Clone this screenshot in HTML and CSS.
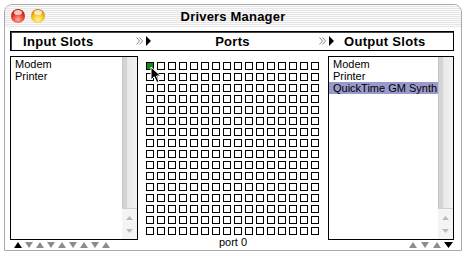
FILE: index.html
```html
<!DOCTYPE html>
<html>
<head>
<meta charset="utf-8">
<link rel="stylesheet" href="styles.css">
</head>
<body>
<div class="window">
  <div class="titlebar">
    <div class="lights"><span class="light red"></span><span class="light yellow"></span></div>
    <div class="title">Drivers Manager</div>
    <div></div>
  </div>
  <div class="content">
    <div class="header">
      <div class="hcol hleft">
        <span>Input Slots</span>
        <svg class="harrow" width="16" height="10" viewBox="0 0 16 10"><polyline points="0.5,1.5 3.5,5 0.5,8.5" fill="none" stroke="#888"/><polyline points="3.5,1.5 6.5,5 3.5,8.5" fill="none" stroke="#888"/><polygon points="10,0 15,5 10,10" fill="#000"/></svg>
      </div>
      <div class="hcol hmid">Ports</div>
      <div class="hcol hright">
        <svg class="harrow" width="16" height="10" viewBox="0 0 16 10"><polyline points="0.5,1.5 3.5,5 0.5,8.5" fill="none" stroke="#888"/><polyline points="3.5,1.5 6.5,5 3.5,8.5" fill="none" stroke="#888"/><polygon points="10,0 15,5 10,10" fill="#000"/></svg>
        <span>Output Slots</span>
      </div>
    </div>
    <div class="panes">
      <div class="list">
        <div class="items">
          <div class="item">Modem</div>
          <div class="item">Printer</div>
        </div>
        <div class="scrollbar">
          <div class="track"></div>
          <div class="sarrows">
            <svg width="7" height="4" viewBox="0 0 7 4"><polygon points="0,4 3.5,0 7,4" fill="#bcbcbc"/></svg>
            <svg width="7" height="4" viewBox="0 0 7 4"><polygon points="0,0 7,0 3.5,4" fill="#bcbcbc"/></svg>
          </div>
        </div>
      </div>
      <div class="matrix">
        <div class="grid">
          <i class="on"></i><i></i><i></i><i></i><i></i><i></i><i></i><i></i><i></i><i></i><i></i><i></i><i></i><i></i><i></i><i></i>
          <i></i><i></i><i></i><i></i><i></i><i></i><i></i><i></i><i></i><i></i><i></i><i></i><i></i><i></i><i></i><i></i>
          <i></i><i></i><i></i><i></i><i></i><i></i><i></i><i></i><i></i><i></i><i></i><i></i><i></i><i></i><i></i><i></i>
          <i></i><i></i><i></i><i></i><i></i><i></i><i></i><i></i><i></i><i></i><i></i><i></i><i></i><i></i><i></i><i></i>
          <i></i><i></i><i></i><i></i><i></i><i></i><i></i><i></i><i></i><i></i><i></i><i></i><i></i><i></i><i></i><i></i>
          <i></i><i></i><i></i><i></i><i></i><i></i><i></i><i></i><i></i><i></i><i></i><i></i><i></i><i></i><i></i><i></i>
          <i></i><i></i><i></i><i></i><i></i><i></i><i></i><i></i><i></i><i></i><i></i><i></i><i></i><i></i><i></i><i></i>
          <i></i><i></i><i></i><i></i><i></i><i></i><i></i><i></i><i></i><i></i><i></i><i></i><i></i><i></i><i></i><i></i>
          <i></i><i></i><i></i><i></i><i></i><i></i><i></i><i></i><i></i><i></i><i></i><i></i><i></i><i></i><i></i><i></i>
          <i></i><i></i><i></i><i></i><i></i><i></i><i></i><i></i><i></i><i></i><i></i><i></i><i></i><i></i><i></i><i></i>
          <i></i><i></i><i></i><i></i><i></i><i></i><i></i><i></i><i></i><i></i><i></i><i></i><i></i><i></i><i></i><i></i>
          <i></i><i></i><i></i><i></i><i></i><i></i><i></i><i></i><i></i><i></i><i></i><i></i><i></i><i></i><i></i><i></i>
          <i></i><i></i><i></i><i></i><i></i><i></i><i></i><i></i><i></i><i></i><i></i><i></i><i></i><i></i><i></i><i></i>
          <i></i><i></i><i></i><i></i><i></i><i></i><i></i><i></i><i></i><i></i><i></i><i></i><i></i><i></i><i></i><i></i>
          <i></i><i></i><i></i><i></i><i></i><i></i><i></i><i></i><i></i><i></i><i></i><i></i><i></i><i></i><i></i><i></i>
          <i></i><i></i><i></i><i></i><i></i><i></i><i></i><i></i><i></i><i></i><i></i><i></i><i></i><i></i><i></i><i></i>
        </div>
        <svg class="cursor" width="12" height="18" viewBox="0 0 12 18"><path d="M1 1 V14 L4.2 10.8 L6.8 16.6 L9 15.6 L6.5 10 H10.8 Z" fill="#000" stroke="#fff" stroke-width="1" stroke-linejoin="miter"/></svg>
      </div>
      <div class="list">
        <div class="items">
          <div class="item">Modem</div>
          <div class="item">Printer</div>
          <div class="item selected">QuickTime GM Synth</div>
        </div>
        <div class="scrollbar">
          <div class="track"></div>
          <div class="sarrows">
            <svg width="7" height="4" viewBox="0 0 7 4"><polygon points="0,4 3.5,0 7,4" fill="#bcbcbc"/></svg>
            <svg width="7" height="4" viewBox="0 0 7 4"><polygon points="0,0 7,0 3.5,4" fill="#bcbcbc"/></svg>
          </div>
        </div>
      </div>
    </div>
    <div class="footer">
      <svg class="tris-left" width="97" height="6" viewBox="0 0 97 6">
        <polygon points="0,6 4,0 8,6" fill="#000"/>
        <polygon points="11,0 19,0 15,6" fill="#8c8c8c"/>
        <polygon points="22,6 26,0 30,6" fill="#8c8c8c"/>
        <polygon points="33,0 41,0 37,6" fill="#8c8c8c"/>
        <polygon points="44,6 48,0 52,6" fill="#8c8c8c"/>
        <polygon points="55,0 63,0 59,6" fill="#8c8c8c"/>
        <polygon points="66,6 70,0 74,6" fill="#8c8c8c"/>
        <polygon points="77,0 85,0 81,6" fill="#8c8c8c"/>
        <polygon points="88,6 92,0 96,6" fill="#8c8c8c"/>
      </svg>
      <div class="port-label">port 0</div>
      <svg class="tris-right" width="44" height="6" viewBox="0 0 44 6">
        <polygon points="0,6 4,0 8,6" fill="#8c8c8c"/>
        <polygon points="12,0 20,0 16,6" fill="#8c8c8c"/>
        <polygon points="24,6 28,0 32,6" fill="#8c8c8c"/>
        <polygon points="35,0 44,0 39.5,6" fill="#000"/>
      </svg>
    </div>
  </div>
</div>
</body>
</html>
```

FILE: styles.css
```css
body {
  margin: 0;
  background: #fff;
  font-family: "Liberation Sans", Arial, sans-serif;
  color: #000;
}

.window {
  margin: 4px 0 0 4px;
  width: 456px;
  height: 245px;
  border: 1px solid #a9a9a9;
  border-radius: 8px 8px 0 0;
  background: #fff;
  display: flex;
  flex-direction: column;
  overflow: hidden;
}

.titlebar {
  height: 22px;
  flex: none;
  display: grid;
  grid-template-columns: 1fr auto 1fr;
  align-items: center;
  background: repeating-linear-gradient(to bottom, #fafafa 0 1px, #e6e6e6 1px 2px);
}

.lights {
  display: flex;
  gap: 6px;
  padding-left: 6px;
}

.light {
  width: 14px;
  height: 14px;
  border-radius: 50%;
  position: relative;
}

.light::after {
  content: "";
  position: absolute;
  left: 3px;
  top: 1px;
  width: 8px;
  height: 5px;
  border-radius: 50%;
  background: rgba(255, 255, 255, 0.75);
}

.red {
  background: radial-gradient(circle at 50% 75%, #ffb0a0 0, #ee3b2c 45%, #a40e0a 85%, #6e0605 100%);
}

.yellow {
  background: radial-gradient(circle at 50% 75%, #fff6a0 0, #f7c21a 45%, #c86a05 85%, #8a4a02 100%);
}

.title {
  font-weight: bold;
  font-size: 13px;
  letter-spacing: 0.2px;
}

.content {
  flex: 1;
  padding: 4px 7px 0 5px;
  display: flex;
  flex-direction: column;
}

.header {
  height: 20px;
  box-sizing: border-box;
  border: 1px solid #000;
  box-shadow: inset 1px 1px 0 #444;
  display: grid;
  grid-template-columns: 141px 1fr 140px;
  align-items: center;
  font-weight: bold;
  font-size: 13px;
  letter-spacing: 0.3px;
}

.hcol {
  display: flex;
  align-items: center;
}

.hleft {
  padding-left: 12px;
  justify-content: space-between;
}

.hmid {
  justify-content: center;
}

.hright {
  padding-left: 6px;
  gap: 9px;
}

.harrow {
  display: block;
}

.panes {
  margin-top: 5px;
  height: 184px;
  flex: none;
  display: grid;
  grid-template-columns: 128px 1fr 126px;
}

.list {
  border: 1px solid #000;
  display: flex;
  font-size: 11px;
  min-width: 0;
}

.items {
  flex: 1;
  padding-top: 1px;
}

.item {
  height: 12px;
  line-height: 12px;
  padding-left: 4px;
  white-space: nowrap;
}

.item.selected {
  background: #9999cc;
}

.scrollbar {
  width: 15px;
  display: flex;
  flex-direction: column;
  background: linear-gradient(to right, #c4c4c4 0 1px, #d4d4d4 1px 5px, #e8e8e8 5px, #f2f2f2 100%);
}

.track {
  flex: 1;
}

.sarrows {
  height: 30px;
  border-top: 1px solid #cfcfcf;
  background: #f4f4f4;
  display: flex;
  flex-direction: column;
  align-items: center;
  justify-content: center;
  gap: 9px;
}

.sarrows svg {
  display: block;
}

.matrix {
  position: relative;
}

.grid {
  margin: 6px 0 0 8px;
  display: grid;
  grid-template-columns: repeat(16, 8px);
  grid-auto-rows: 8px;
  gap: 3px;
}

.grid i {
  box-sizing: border-box;
  border: 1px solid #000;
}

.grid i.on {
  background: #138a13;
}

.cursor {
  position: absolute;
  left: 12px;
  top: 10px;
}

.footer {
  display: grid;
  grid-template-columns: 128px 1fr 126px;
  align-items: start;
}

.tris-left {
  display: block;
  margin: 2px 0 0 4px;
}

.tris-right {
  display: block;
  margin: 2px 1px 0 0;
  justify-self: end;
}

.port-label {
  margin-top: -4px;
  text-align: center;
  font-size: 11px;
  line-height: 12px;
  color: #000;
}
```
